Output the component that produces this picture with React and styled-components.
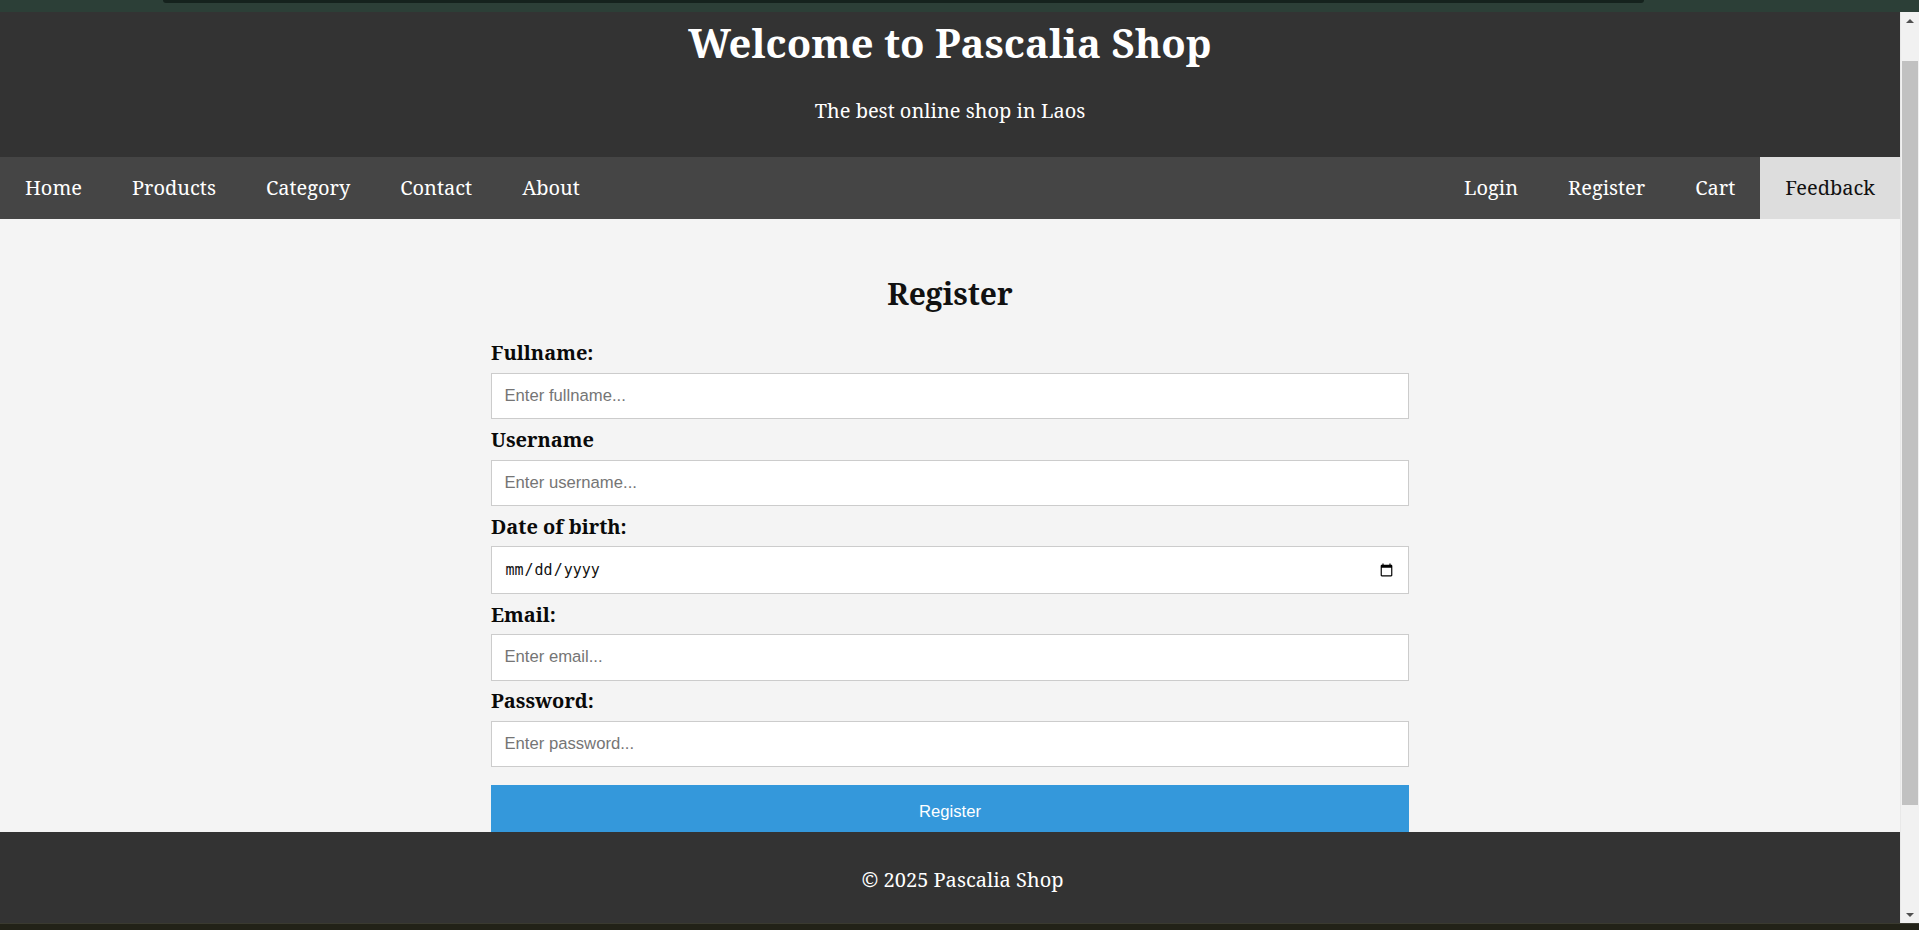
import { useLayoutEffect, useRef } from 'react'
import styled, { createGlobalStyle } from 'styled-components'

const SERIF = `"Noto Serif", "DejaVu Serif", serif`
const SANS = `"Liberation Sans", Arial, sans-serif`
const MONO = `"DejaVu Sans Mono", "Liberation Mono", monospace`

// page is shown scrolled a little, like the screenshot
const SCROLL_OFFSET = 35

const leftLinks = ['Home', 'Products', 'Category', 'Contact', 'About']
const rightLinks = ['Login', 'Register', 'Cart', 'Feedback']

const fields = [
	{ id: 'fullname', label: 'Fullname:', type: 'text', placeholder: 'Enter fullname...' },
	{ id: 'username', label: 'Username', type: 'text', placeholder: 'Enter username...' },
	{ id: 'dob', label: 'Date of birth:', type: 'date' },
	{ id: 'email', label: 'Email:', type: 'email', placeholder: 'Enter email...' },
	{ id: 'password', label: 'Password:', type: 'password', placeholder: 'Enter password...' },
]

const App = () => {
	const scrollRef = useRef(null)

	useLayoutEffect(() => {
		if (scrollRef.current) scrollRef.current.scrollTop = SCROLL_OFFSET
	}, [])

	return (
		<Frame>
			<GlobalStyle />
			<TopStrip>
				<TabEdge />
			</TopStrip>
			<Viewport>
				<PageScroll ref={scrollRef}>
					<Header>
						<Title>Welcome to Pascalia Shop</Title>
						<Tagline>The best online shop in Laos</Tagline>
					</Header>
					<Nav>
						<NavGroup>
							{leftLinks.map(link => <NavLink key={link} href='#'>{link}</NavLink>)}
						</NavGroup>
						<NavGroup>
							{rightLinks.map(link => (
								<NavLink key={link} href='#' $active={link === 'Feedback'}>{link}</NavLink>
							))}
						</NavGroup>
					</Nav>
					<Main>
						<FormCard>
							<FormTitle>Register</FormTitle>
							<Form onSubmit={e => e.preventDefault()}>
								{fields.map(field => (
									<Field key={field.id}>
										<Label htmlFor={field.id}>{field.label}</Label>
										{field.type === 'date'
											? <DateInput id={field.id} type='date' />
											: <Input id={field.id} type={field.type} placeholder={field.placeholder} />}
									</Field>
								))}
								<Submit type='submit'>Register</Submit>
							</Form>
						</FormCard>
					</Main>
				</PageScroll>
				<Footer>
					<FooterText>© 2025 Pascalia Shop</FooterText>
				</Footer>
				<ScrollBar>
					<ScrollArrow $dir='up' />
					<ScrollTrack>
						<ScrollThumb />
					</ScrollTrack>
					<ScrollArrow $dir='down' />
				</ScrollBar>
			</Viewport>
			<BottomStrip />
		</Frame>
	)
}

const GlobalStyle = createGlobalStyle`
	html, body {
		margin: 0;
		padding: 0;
		overflow: hidden;
	}
	body {
		font-family: ${SERIF};
		background: #1f1f17;
	}
	* {
		box-sizing: border-box;
	}
`

const Frame = styled.div`
	width: 1919px;
	height: 930px;
	display: flex;
	flex-direction: column;
`

const TopStrip = styled.div`
	height: 12px;
	background: #2c3f37;
	padding: 0 275px 0 163px;
`

const TabEdge = styled.div`
	height: 3px;
	background: #15221d;
	border-radius: 0 0 4px 4px;
`

const BottomStrip = styled.div`
	flex: 1;
	background: #222218;
	border-top: 1px solid #3a3a30;
`

const Viewport = styled.div`
	position: relative;
	display: flex;
	height: 911px;
	overflow: hidden;
`

const PageScroll = styled.div`
	flex: 1;
	overflow: hidden;
	background: #f4f4f4;
`

const Header = styled.header`
	background: #333;
	color: #fff;
	text-align: center;
	padding: 12.5px 0;
`

const Title = styled.h1`
	margin: 26.8px 0 26.2px;
	font-size: 40px;
	line-height: 54.5px;
	font-weight: 700;
`

const Tagline = styled.p`
	margin: 0 0 20.6px;
	font-size: 20px;
	line-height: 27px;
`

const Nav = styled.nav`
	display: flex;
	justify-content: space-between;
	background: #454545;
`

const NavGroup = styled.div`
	display: flex;
`

const NavLink = styled.a`
	display: block;
	padding: 17px 25px 18px;
	font-size: 20px;
	line-height: 27px;
	text-decoration: none;
	color: ${p => p.$active ? '#111' : '#fff'};
	background: ${p => p.$active ? '#ddd' : 'transparent'};
`

const Main = styled.main`
	padding: 29.5px 0 140px;
`

const FormCard = styled.section`
	width: 918px;
	margin: 0 auto;
`

const FormTitle = styled.h2`
	margin: 24.9px 0;
	text-align: center;
	font-size: 30px;
	line-height: 41px;
	font-weight: 700;
	color: #111;
`

const Form = styled.form`
	display: flex;
	flex-direction: column;
`

const Field = styled.div`
	display: flex;
	flex-direction: column;
	gap: 6.5px;
	margin-bottom: 6.75px;
`

const Label = styled.label`
	font-size: 20px;
	line-height: 27px;
	font-weight: 700;
	color: #0a0a0a;
`

const Input = styled.input`
	width: 100%;
	height: 46.5px;
	padding: 0 12.5px;
	border: 1.25px solid #ccc;
	border-radius: 0;
	background: #fff;
	font-family: ${SANS};
	font-size: 16.67px;
	color: #222;
	outline: none;
	&::placeholder {
		color: #757575;
	}
`

const DateInput = styled(Input)`
	height: 47.5px;
	font-family: ${MONO};
	font-size: 15px;
	color: #111;
`

const Submit = styled.button`
	margin-top: 10.5px;
	width: 100%;
	height: 54px;
	border: none;
	border-radius: 0;
	background: #3498db;
	color: #fff;
	font-family: ${SANS};
	font-size: 16.67px;
	cursor: pointer;
`

const Footer = styled.footer`
	position: absolute;
	left: 0;
	bottom: 0;
	width: 1925px;
	background: #333;
	color: #fff;
	text-align: center;
	padding: 14px 0 10px;
`

const FooterText = styled.p`
	margin: 20px 0;
	font-size: 20px;
	line-height: 27px;
`

const ScrollBar = styled.div`
	position: relative;
	z-index: 1;
	width: 19px;
	display: flex;
	flex-direction: column;
	background: #f1f1f1;
	border-left: 1px solid #e8e8e8;
`

const ScrollArrow = styled.div`
	height: 17px;
	display: flex;
	align-items: center;
	justify-content: center;
	&::after {
		content: '';
		border-left: 4px solid transparent;
		border-right: 4px solid transparent;
		${p => p.$dir === 'up'
			? 'border-bottom: 4px solid #505050;'
			: 'border-top: 4px solid #505050;'}
	}
`

const ScrollTrack = styled.div`
	flex: 1;
	padding: 0 1px;
`

const ScrollThumb = styled.div`
	margin-top: 32px;
	height: 744px;
	background: #c1c1c1;
`

export default App
